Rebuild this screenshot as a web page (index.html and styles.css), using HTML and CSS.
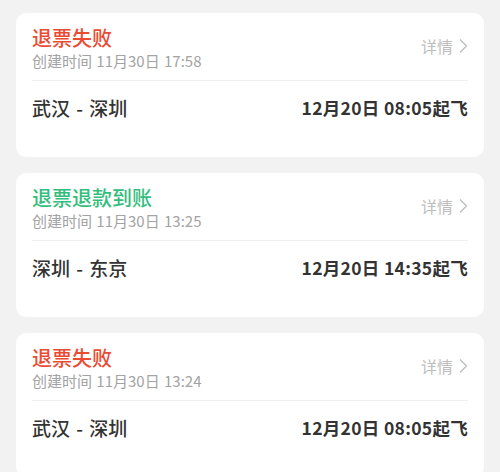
FILE: index.html
```html
<!DOCTYPE html>
<html lang="zh-CN">

<head>
    <meta charset="UTF-8">
    <title>退票记录</title>
    <link rel="stylesheet" href="styles.css">
</head>

<body>

    <div class="list">
        <div class="card">
            <div class="head">
                <div class="info">
                    <div class="status fail">退票失败</div>
                    <div class="created">创建时间 11月30日 17:58</div>
                </div>
                <div class="more">详情
                    <svg class="arrow" viewBox="0 0 10 16" width="10" height="16">
                        <path d="M2 1.5 L8.5 8 L2 14.5" fill="none" stroke="#bdbdbd" stroke-width="1.3" />
                    </svg>
                </div>
            </div>
            <div class="route">
                <div class="cities">武汉 - 深圳</div>
                <div class="depart">12月20日 08:05起飞</div>
            </div>
        </div>

        <div class="card">
            <div class="head">
                <div class="info">
                    <div class="status done">退票退款到账</div>
                    <div class="created">创建时间 11月30日 13:25</div>
                </div>
                <div class="more">详情
                    <svg class="arrow" viewBox="0 0 10 16" width="10" height="16">
                        <path d="M2 1.5 L8.5 8 L2 14.5" fill="none" stroke="#bdbdbd" stroke-width="1.3" />
                    </svg>
                </div>
            </div>
            <div class="route">
                <div class="cities">深圳 - 东京</div>
                <div class="depart">12月20日 14:35起飞</div>
            </div>
        </div>

        <div class="card">
            <div class="head">
                <div class="info">
                    <div class="status fail">退票失败</div>
                    <div class="created">创建时间 11月30日 13:24</div>
                </div>
                <div class="more">详情
                    <svg class="arrow" viewBox="0 0 10 16" width="10" height="16">
                        <path d="M2 1.5 L8.5 8 L2 14.5" fill="none" stroke="#bdbdbd" stroke-width="1.3" />
                    </svg>
                </div>
            </div>
            <div class="route">
                <div class="cities">武汉 - 深圳</div>
                <div class="depart">12月20日 08:05起飞</div>
            </div>
        </div>
    </div>

</body>

</html>
```

FILE: styles.css
```css
body {
    margin: 0;
    background: #f2f2f2;
    font-family: "Noto Sans CJK SC", "Noto Sans", sans-serif;
    color: #333;
}

.list {
    display: flex;
    flex-direction: column;
    gap: 16px;
    padding: 13px 16px;
}

.card {
    background: #fff;
    border-radius: 10px;
    padding: 12px 16px 0;
    height: 144px;
    box-sizing: border-box;
}

.head {
    display: flex;
    justify-content: space-between;
    align-items: center;
    padding-bottom: 9px;
    border-bottom: 1px solid #efefef;
}

.status {
    font-size: 20px;
    line-height: 26px;
    font-weight: 500;
}

.fail {
    color: #eb4a32;
}

.done {
    color: #33bd7c;
}

.created {
    font-size: 15px;
    line-height: 20px;
    color: #a3a3a3;
    word-spacing: 1px;
}

.more {
    display: flex;
    align-items: center;
    gap: 5px;
    margin-top: -4px;
    font-size: 16px;
    color: #bdbdbd;
}

.route {
    display: flex;
    justify-content: space-between;
    align-items: center;
    padding-top: 15px;
    line-height: 24px;
}

.cities {
    font-size: 19px;
    font-weight: 500;
    color: #333;
    word-spacing: 2px;
}

.depart {
    font-size: 17.5px;
    font-weight: 700;
    color: #333;
    letter-spacing: 0.3px;
}
```
